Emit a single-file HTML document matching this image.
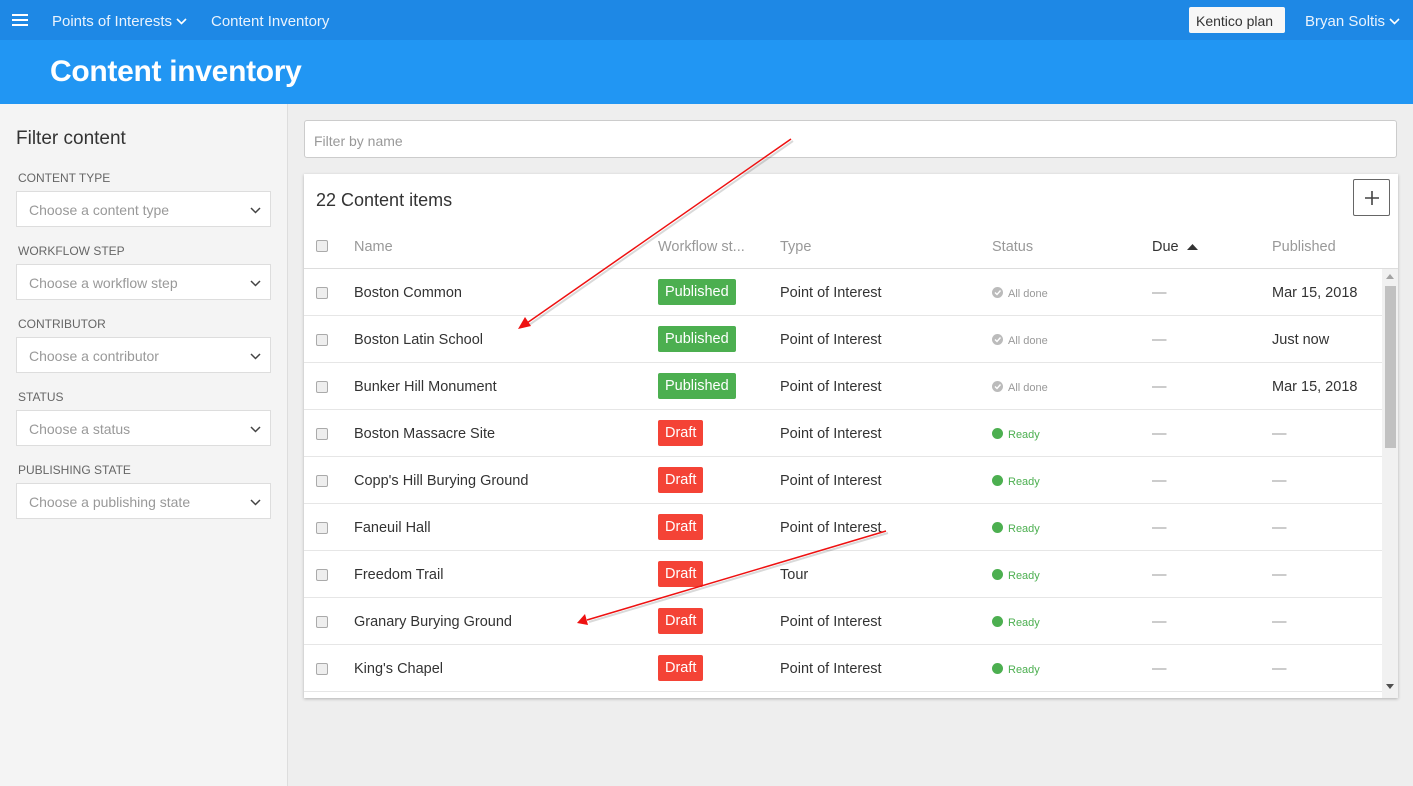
<!DOCTYPE html>
<html><head><meta charset="utf-8"><style>
*{box-sizing:border-box;margin:0;padding:0}
body{width:1413px;height:786px;overflow:hidden;background:#eeeeee;font-family:"Liberation Sans",sans-serif;color:#333;position:relative}
.abs{position:absolute}
#top{left:0;top:0;width:1413px;height:40px;background:#1e88e5;color:#fff}
#top .t{position:absolute;top:13px;font-size:15px;color:#eaf3fd}
#hdr{left:0;top:40px;width:1413px;height:64px;background:#2196f3}
#hdr h1{position:absolute;left:50px;top:15px;font-size:30px;font-weight:bold;color:#fff;letter-spacing:-0.3px}
#side{left:0;top:104px;width:288px;height:682px;background:#f4f4f4;border-right:1px solid #ddd}
.lbl{position:absolute;left:18px;font-size:12px;color:#666}
.sel{position:absolute;left:16px;width:255px;height:36px;background:#fff;border:1px solid #ddd;font-size:14px;color:#999;padding:10px 12px 0}
.sel svg{position:absolute;right:9px;top:15px}
#filter{left:304px;top:120px;width:1093px;height:38px;background:#fff;border:1px solid #ccc;border-radius:3px;font-size:14px;color:#999;padding:12px 9px 0}
#card{left:304px;top:174px;width:1094px;height:524px;background:#fff;box-shadow:0 1px 3px rgba(0,0,0,.25);overflow:hidden}
.th{position:absolute;top:65px;font-size:14.5px;color:#999}
.cb{position:absolute;left:12px;width:12px;height:12px;border:1px solid #aaa;border-radius:2px;background:#eee}
.row{position:absolute;left:0;width:1078px;height:47px;border-bottom:1px solid #e6e6e6}
.row .c{position:absolute;top:16px;font-size:14.5px;color:#333}
.badge{position:absolute;top:10px;height:26px;color:#fff;font-size:14.5px;padding:5px 7px 0;border-radius:2px}
.pub{background:#4caf50}.dr{background:#f44336}
.st{position:absolute;top:18px;font-size:11px;line-height:12px}
.dot{display:inline-block;width:11px;height:11px;border-radius:50%;vertical-align:-1px;margin-right:5px}
</style></head><body>
<div id="top" class="abs">
 <svg class="abs" style="left:12px;top:14px" width="16" height="12"><rect y="0" width="16" height="2" fill="#fff"/><rect y="5" width="16" height="2" fill="#fff"/><rect y="10" width="16" height="2" fill="#fff"/></svg>
 <span class="t" style="left:52px">Points of Interests</span>
 <svg class="abs" style="left:176px;top:18px" width="11" height="7"><path d="M1 1l4.5 4.5L10 1" stroke="#fff" stroke-width="1.6" fill="none"/></svg>
 <span class="t" style="left:211px">Content Inventory</span>
 <div class="abs" style="left:1189px;top:7px;width:96px;height:26px;background:#f7f7f7;border-radius:2px;color:#333;font-size:14px;padding:6px 7px 0">Kentico plan</div>
 <span class="t" style="left:1305px">Bryan Soltis</span>
 <svg class="abs" style="left:1389px;top:18px" width="11" height="7"><path d="M1 1l4.5 4.5L10 1" stroke="#fff" stroke-width="1.6" fill="none"/></svg>
</div>
<div id="hdr" class="abs"><h1>Content inventory</h1></div>
<div id="side" class="abs">
 <div class="abs" style="left:16px;top:24px;font-size:19px;color:#333">Filter content</div>
 <div class="lbl" style="top:67px">CONTENT TYPE</div>
 <div class="sel" style="top:87px">Choose a content type<svg width="11" height="7"><path d="M1 1l4.5 4.5L10 1" stroke="#444" stroke-width="1.5" fill="none"/></svg></div>
 <div class="lbl" style="top:140px">WORKFLOW STEP</div>
 <div class="sel" style="top:160px">Choose a workflow step<svg width="11" height="7"><path d="M1 1l4.5 4.5L10 1" stroke="#444" stroke-width="1.5" fill="none"/></svg></div>
 <div class="lbl" style="top:213px">CONTRIBUTOR</div>
 <div class="sel" style="top:233px">Choose a contributor<svg width="11" height="7"><path d="M1 1l4.5 4.5L10 1" stroke="#444" stroke-width="1.5" fill="none"/></svg></div>
 <div class="lbl" style="top:286px">STATUS</div>
 <div class="sel" style="top:306px">Choose a status<svg width="11" height="7"><path d="M1 1l4.5 4.5L10 1" stroke="#444" stroke-width="1.5" fill="none"/></svg></div>
 <div class="lbl" style="top:359px">PUBLISHING STATE</div>
 <div class="sel" style="top:379px">Choose a publishing state<svg width="11" height="7"><path d="M1 1l4.5 4.5L10 1" stroke="#444" stroke-width="1.5" fill="none"/></svg></div>
</div>
<div id="filter" class="abs">Filter by name</div>
<div id="card" class="abs">
 <div class="abs" style="left:12px;top:16px;font-size:18px;color:#333">22 Content items</div>
 <div class="abs" style="left:1049px;top:5px;width:37px;height:37px;border:1px solid #666;border-radius:2px"><svg style="position:absolute;left:11px;top:11px" width="14" height="14"><path d="M7 0v14M0 7h14" stroke="#444" stroke-width="1.6"/></svg></div>
 <div class="cb" style="top:66px"></div>
 <div class="th" style="left:50px">Name</div>
 <div class="th" style="left:354px">Workflow st...</div>
 <div class="th" style="left:476px">Type</div>
 <div class="th" style="left:688px">Status</div>
 <div class="th" style="left:848px;color:#333">Due</div>
 <svg class="abs" style="left:883px;top:70px" width="11" height="6"><path d="M0 6L5.5 0L11 6z" fill="#333"/></svg>
 <div class="th" style="left:968px">Published</div>
 <div class="abs" style="left:0;top:94px;width:1094px;height:1px;background:#ddd"></div>
 <div class="abs" style="left:1078px;top:95px;width:16px;height:429px;background:#f1f1f1"></div>
 <div class="abs" style="left:1081px;top:112px;width:11px;height:162px;background:#c1c1c1"></div>
 <svg class="abs" style="left:1082px;top:100px" width="8" height="5"><path d="M0 5L4 0L8 5z" fill="#a3a3a3"/></svg>
 <svg class="abs" style="left:1082px;top:510px" width="8" height="5"><path d="M0 0L4 5L8 0z" fill="#505050"/></svg>
 <div id="rows"></div>
</div>
<svg class="abs" style="left:0;top:0;pointer-events:none" width="1413" height="786">
 <g stroke="rgba(0,0,0,.15)" stroke-width="2" transform="translate(2,2)"><line x1="791" y1="139" x2="527" y2="323"/><line x1="886" y1="531" x2="587" y2="620"/></g>
 <g stroke="#ee1111" stroke-width="1.5"><line x1="791" y1="139" x2="527" y2="323"/><line x1="886" y1="531" x2="587" y2="620"/></g>
 <path d="M518 329L525 317L531 326z" fill="#ee1111"/>
 <path d="M577 623L585 614L588 625z" fill="#ee1111"/>
</svg>
<script>
var d=[["Boston Common",1,"Point of Interest",1,"Mar 15, 2018"],["Boston Latin School",1,"Point of Interest",1,"Just now"],["Bunker Hill Monument",1,"Point of Interest",1,"Mar 15, 2018"],["Boston Massacre Site",0,"Point of Interest",0,"—"],["Copp's Hill Burying Ground",0,"Point of Interest",0,"—"],["Faneuil Hall",0,"Point of Interest",0,"—"],["Freedom Trail",0,"Tour",0,"—"],["Granary Burying Ground",0,"Point of Interest",0,"—"],["King's Chapel",0,"Point of Interest",0,"—"]];
var h="";d.forEach(function(r,i){var t=95+i*47;
h+='<div class="row" style="top:'+t+'px"><div class="cb" style="top:18px"></div><div class="c" style="left:50px">'+r[0]+'</div>'+
(r[1]?'<div class="badge pub" style="left:354px">Published</div>':'<div class="badge dr" style="left:354px">Draft</div>')+
'<div class="c" style="left:476px">'+r[2]+'</div>'+
(r[3]?'<div class="st" style="left:688px;color:#999"><span class="dot" style="background:#bbb"><svg width="11" height="11" style="display:block"><path d="M3 5.5l2 2 3.5-4" stroke="#fff" stroke-width="1.4" fill="none"/></svg></span>All done</div>':'<div class="st" style="left:688px;color:#4caf50"><span class="dot" style="background:#4caf50"></span>Ready</div>')+
'<div class="c" style="left:848px;color:#999">—</div><div class="c" style="left:968px;'+(r[4]=="—"?"color:#999":"")+'">'+r[4]+'</div></div>';});
document.getElementById("rows").innerHTML=h;
</script>
</body></html>
